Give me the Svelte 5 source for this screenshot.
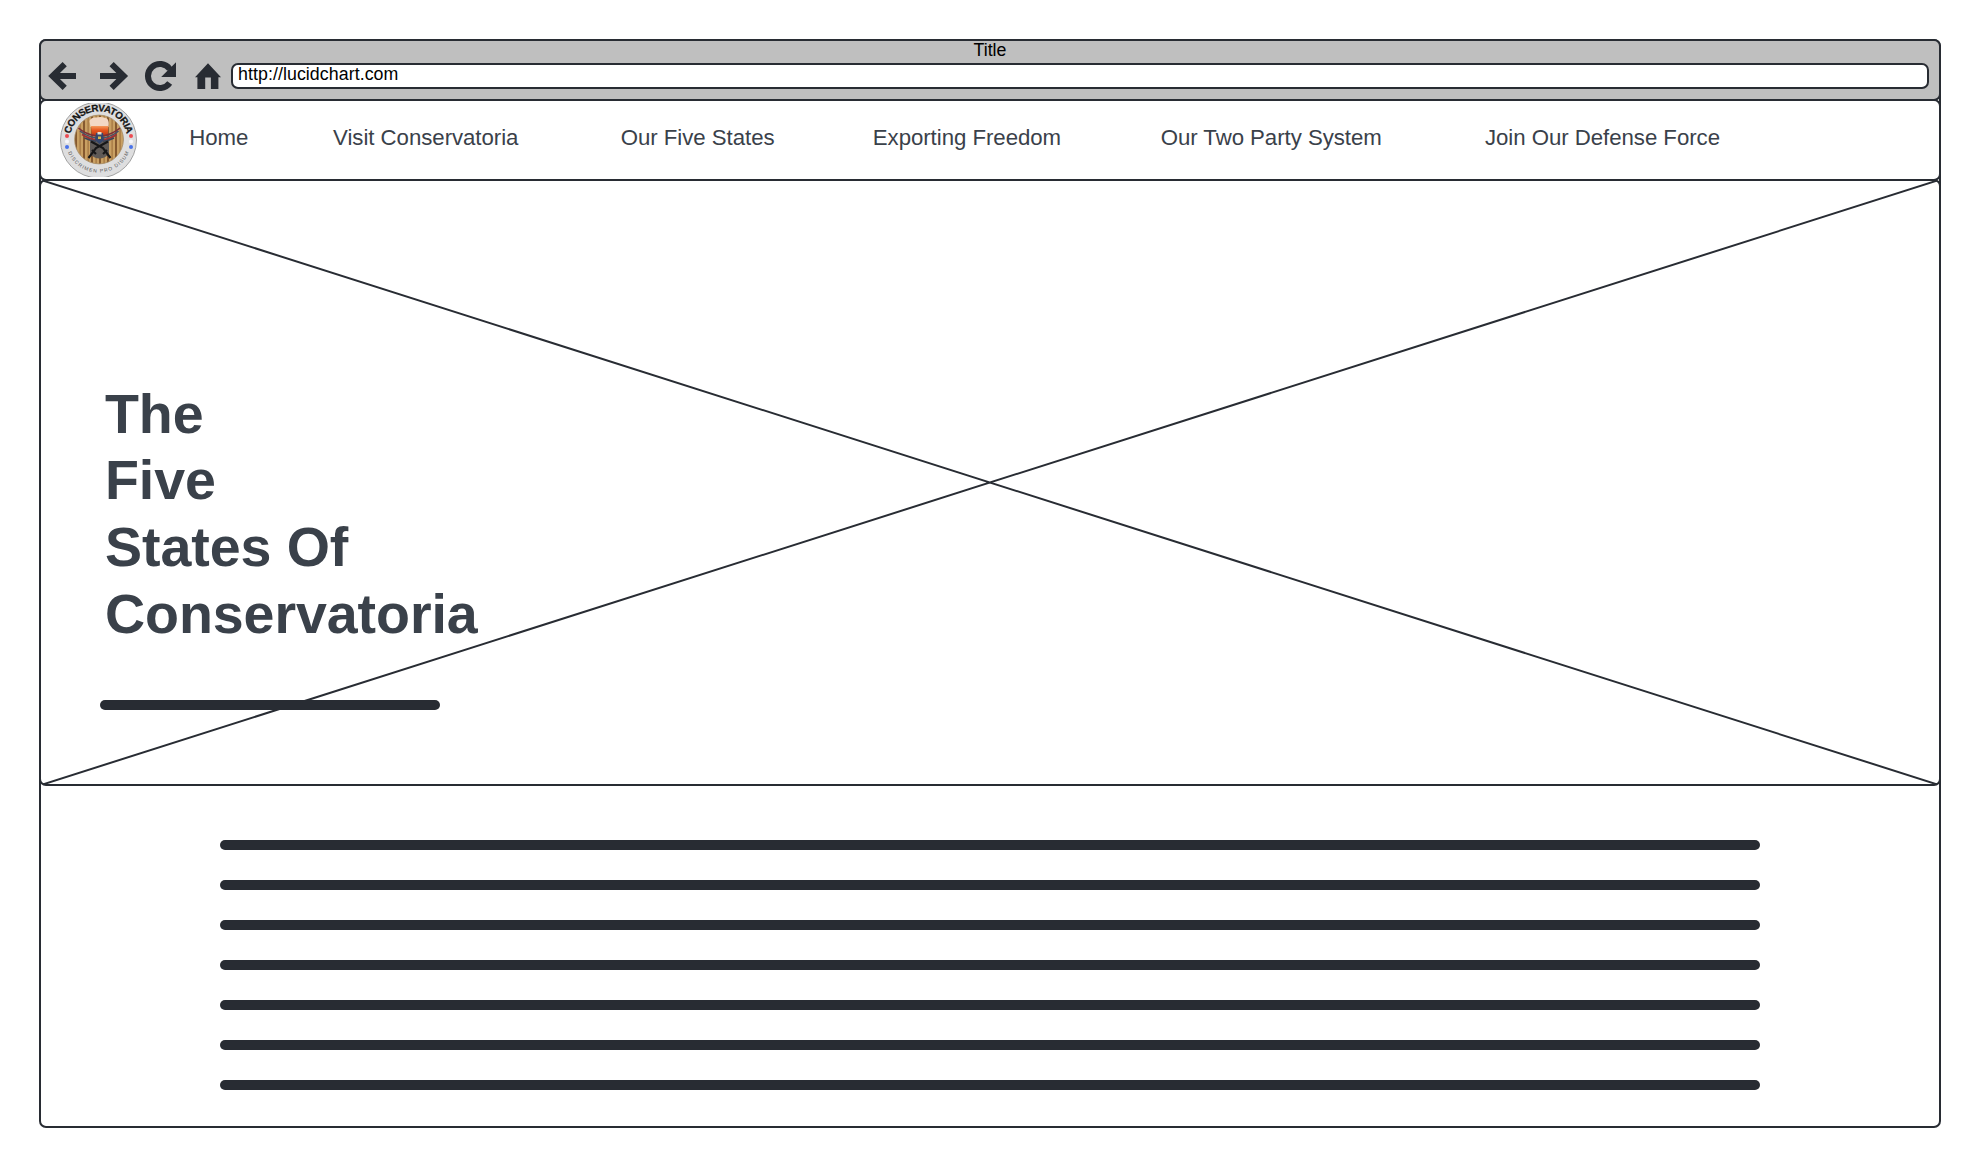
<script>
  const links = [
    'Home',
    'Visit Conservatoria',
    'Our Five States',
    'Exporting Freedom',
    'Our Two Party System',
    'Join Our Defense Force'
  ];
  const headline = ['The', 'Five', 'States Of', 'Conservatoria'];
  const textLines = [1, 2, 3, 4, 5, 6, 7];
</script>

<div class="window">
  <header class="chrome">
    <div class="title">Title</div>
    <div class="toolbar">
      <svg class="controls" viewBox="0 0 190 36" width="190" height="36" aria-hidden="true">
        <g fill="none" stroke="#282c33" stroke-width="6">
          <path d="M35 21H12" />
          <path d="M23.7 9.1L11.5 21L23.7 32.9" />
          <path d="M59 21H82" />
          <path d="M70.6 9.1L82.8 21L70.6 32.9" />
          <path d="M128.7 28A12 12 0 1 1 128.8 14.1" />
        </g>
        <path d="M135 7.3V22H120.2Z" fill="#282c33" />
        <path d="M167 8.3L180 22.2H177.4V34H169.9V22.6H164.2V34H156.4V22.2H154Z" fill="#282c33" />
      </svg>
      <div class="address">http://lucidchart.com</div>
    </div>
  </header>

  <nav class="menu">
    <svg class="logo" viewBox="0 0 77 74" width="77" height="74" role="img" aria-label="Conservatoria seal">
      <defs>
        <path id="arc-top" d="M9.8 37A28.7 28.7 0 0 1 67.2 37" />
        <path id="arc-bottom" d="M5.4 36.5A33.1 33.1 0 0 0 71.6 36.5" />
        <pattern id="wood" width="8" height="50" patternUnits="userSpaceOnUse" x="15">
          <rect width="8" height="50" fill="#c9a063" />
          <rect width="2" height="50" fill="#85592f" />
          <rect x="4.5" width="1.2" height="50" fill="#a2743f" />
        </pattern>
        <linearGradient id="beer" x1="0" x2="0" y1="0" y2="1">
          <stop offset="0" stop-color="#f49a5c" />
          <stop offset=".4" stop-color="#e8591f" />
          <stop offset="1" stop-color="#b93314" />
        </linearGradient>
      </defs>
      <circle cx="38.5" cy="37" r="38" fill="#dededf" stroke="#8d8d8d" stroke-width=".8" />
      <circle cx="39" cy="36.5" r="24.4" fill="url(#wood)" stroke="#a58a64" stroke-width=".8" />
      <path d="M30.5 24L29.5 18Q31 14 36 14.5Q42 13 47 15.5Q49.5 18 48.5 24Z" fill="#f3d8c4" />
      <path d="M31 23H48.500L47.500 33H32Z" fill="url(#beer)" />
      <path d="M30 37H49V51Q39.500 60 30 51Z" fill="#5f5a57" />
      <g fill="none" stroke-width="1.6">
        <path d="M18.500 25Q25 31 36 33M60 25Q53 31 43 33" stroke="#7c2f38" />
        <path d="M20 28Q26 33 36 35M58.500 28Q53 33 43 35" stroke="#465069" />
        <path d="M22 31.500Q28 35.500 36 37M56.500 31.500Q51 35.500 43 37" stroke="#9b3038" />
        <path d="M24.500 35Q30 37.500 36 38.500M54 35Q49 37.500 43 38.500" stroke="#3b4558" />
      </g>
      <path d="M36 30H43L44 37L39.500 41L35 37Z" fill="#34476e" />
      <path d="M37.500 29H41.500V31.500H37.500Z" fill="#e7dfce" />
      <path d="M38 33.500H41V36H38Z" fill="#d5b64c" />
      <path d="M28.500 55L36 45L48 38.500M50.500 55L43 45L31 38.500M32 47L36 51M47 47L43 51" stroke="#171718" stroke-width="2.1" fill="none" />
      <circle cx="7" cy="33" r="2" fill="#ed4c52" />
      <circle cx="71" cy="33" r="2" fill="#ed4c52" />
      <circle cx="7" cy="38.600" r="2" fill="#f6f6fa" />
      <circle cx="71" cy="38.600" r="2" fill="#f6f6fa" />
      <circle cx="7" cy="44" r="2" fill="#4a73ea" />
      <circle cx="71" cy="44" r="2" fill="#4a73ea" />
      <text class="seal-name"><textPath href="#arc-top" startOffset="50%" text-anchor="middle" textLength="78">CONSERVATORIA</textPath></text>
      <text class="seal-motto"><textPath href="#arc-bottom" startOffset="50%" text-anchor="middle" textLength="77">DISCRIMEN PRO DISUM</textPath></text>
    </svg>
    <ul class="links">
      {#each links as link}
        <li>{link}</li>
      {/each}
    </ul>
  </nav>

  <section class="hero">
    <svg class="cross" viewBox="0 0 1898 603" preserveAspectRatio="none" aria-hidden="true">
      <path d="M0 -1L1898 604M1898 -1L0 604" fill="none" stroke="#282c33" stroke-width="2" />
    </svg>
    <h1>
      {#each headline as line}
        <span>{line}</span>
      {/each}
    </h1>
    <div class="bar short"></div>
  </section>

  <main class="copy">
    {#each textLines as line (line)}
      <div class="bar"></div>
    {/each}
  </main>
</div>

<style>
  :global(body) {
    margin: 0;
    background: #fff;
  }

  .window {
    box-sizing: border-box;
    width: 1902px;
    height: 1089px;
    margin: 39px;
    border: 2px solid #282c33;
    border-radius: 7px;
    font-family: 'Liberation Sans', Arial, sans-serif;
    color: #3a414a;
  }

  .chrome,
  .menu,
  .hero {
    box-sizing: border-box;
    width: 1902px;
    margin-left: -2px;
    border: 2px solid #282c33;
    border-radius: 7px;
  }

  .chrome {
    height: 62px;
    margin-top: -2px;
    background: #bfbfbf;
    color: #000;
    font-size: 17.78px;
  }

  .title {
    height: 22px;
    line-height: 18px;
    text-align: center;
  }

  .toolbar {
    display: flex;
    align-items: flex-start;
  }

  .controls {
    flex: none;
    margin-top: -8px;
  }

  .address {
    box-sizing: border-box;
    width: 1698px;
    height: 26px;
    padding-left: 5px;
    border: 2px solid #282c33;
    border-radius: 7px;
    background: #fff;
    line-height: 18px;
    letter-spacing: 0.07px;
  }

  .menu {
    display: flex;
    height: 82px;
    margin-top: -2px;
    padding-left: 19px;
  }

  .logo {
    flex: none;
    margin-top: 2px;
  }

  .seal-name {
    font: bold 9.8px 'Liberation Sans', Arial, sans-serif;
    fill: #151515;
    stroke: #151515;
    stroke-width: 0.25px;
  }

  .seal-motto {
    font: 5px 'Liberation Sans', Arial, sans-serif;
    fill: #555;
  }

  .links {
    display: grid;
    grid-template-columns: 143.8px 287.7px 252px 287.9px 324.3px 260px;
    margin: 0 0 0 52.3px;
    padding: 24px 0 0;
    list-style: none;
    font-size: 22.22px;
    line-height: 26px;
    letter-spacing: -0.04px;
    white-space: nowrap;
  }

  .hero {
    position: relative;
    height: 607px;
    margin-top: -2px;
    padding: 199.600px 0 0 59px;
  }

  .cross {
    position: absolute;
    inset: 0;
    width: 100%;
    height: 100%;
  }

  h1 {
    position: relative;
    margin: 0;
    padding-left: 5px;
    font-size: 55.56px;
    font-weight: bold;
    line-height: 66.67px;
    letter-spacing: -0.07px;
  }

  h1 span {
    display: block;
  }

  .bar {
    height: 10px;
    border-radius: 5px;
    background: #282c33;
  }

  .short {
    position: relative;
    width: 340px;
    margin-top: 52.400px;
  }

  .copy {
    display: grid;
    gap: 30px;
    width: 1540px;
    margin: 54px 0 0 179px;
  }
</style>
